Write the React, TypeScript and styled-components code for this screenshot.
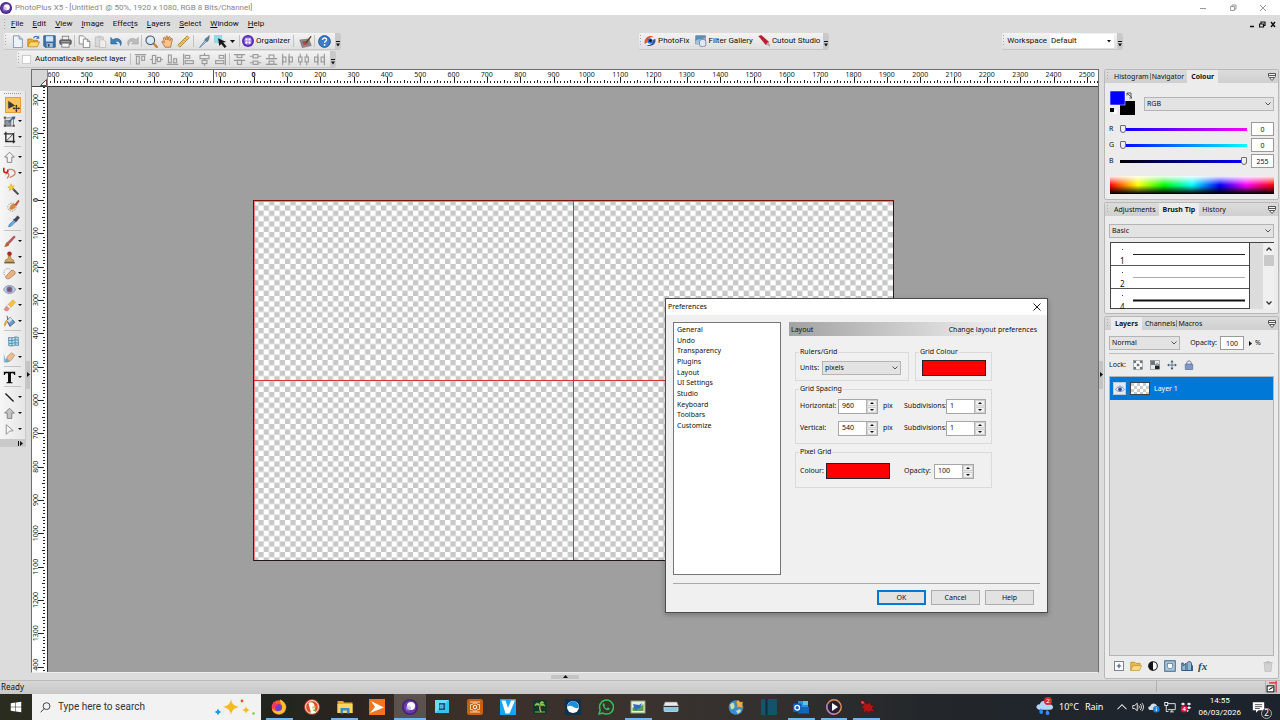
import React from 'react';
import styled, { createGlobalStyle, css } from 'styled-components';

const Global = createGlobalStyle`
  *, *::before, *::after { box-sizing: border-box; }
  html, body { margin: 0; padding: 0; }
  body { font-family: "Noto Sans", "Open Sans", sans-serif; font-size: 8px; color: #111; background: #dcdcdc; }
  button, input, select { font: inherit; color: inherit; margin: 0; padding: 0; border: 0; border-radius: 0; background: none; outline: 0; }
  svg { display: block; flex: none; }
  h1, h2, p, ul, fieldset { margin: 0; padding: 0; font-size: inherit; font-weight: inherit; }
`;

const narrow = css`font-family: Roboto, "Liberation Sans", sans-serif;`;

/* ---------- icons ---------- */

const align = (shapes: React.ReactNode) => <g fill="none" stroke="#9a9a9a" strokeWidth="1.400">{shapes}</g>;

const art: Record<string, React.ReactNode> = {
  photoplus: (<><circle cx="8" cy="8" r="8" fill="#43207c" /><circle cx="8" cy="8" r="6.4" fill="#6a3bb0" /><circle cx="9" cy="7" r="4" fill="#fff" /><circle cx="6.5" cy="9" r="2.6" fill="#b9a3e0" opacity=".6" /></>),
  organizer: (<><circle cx="8" cy="8" r="8" fill="#5a2bb5" /><circle cx="8" cy="8" r="5.6" fill="#8a62dc" /><g fill="#fff"><rect x="4.5" y="4.5" width="3" height="3" /><rect x="8.5" y="4.5" width="3" height="3" /><rect x="4.5" y="8.5" width="3" height="3" /><rect x="8.5" y="8.5" width="3" height="3" /></g></>),
  fresh: (<><path d="M3 1h7l4 4v10.500H3z" fill="#eef3fa" stroke="#75879e" /><path d="M10 1v4h4" fill="#c9d8ea" stroke="#75879e" /></>),
  open: (<><path d="M1 14V5h5l1.500 1.500H13V9" fill="#e9ad36" stroke="#b87c16" /><path d="M1 14.500L4 8.500h11.500L12.500 14.500z" fill="#fbd76f" stroke="#c28a1c" /><path d="M8 4c1-3 4-3 5.500-1" fill="none" stroke="#3a78c0" strokeWidth="1.500" /><path d="M15 .5v4h-4z" fill="#3a78c0" /></>),
  save: (<><path d="M1 1h14v14H2.500L1 13.500z" fill="#3a72ad" stroke="#244e7d" /><rect x="3.500" y="1.500" width="9" height="6.500" fill="#d3e6f5" /><rect x="4.500" y="10" width="7.500" height="5" fill="#aac0d6" /><rect x="6" y="11" width="2" height="3.500" fill="#284f7c" /></>),
  print: (<><rect x="4" y="1.500" width="8" height="5" fill="#eee" stroke="#777" /><rect x="1" y="6" width="14" height="5.500" rx="1" fill="#6b6f75" stroke="#44474b" /><rect x="3.500" y="10" width="9" height="5" fill="#f4f4f4" stroke="#777" /><path d="M3 8h10" stroke="#aaa" /></>),
  copy: (<><path d="M1.500 1h5l2.500 2.500V11h-7.500z" fill="#fdfdfd" stroke="#777" /><path d="M6.500 5h5l3 3v7.500h-8z" fill="#fdfdfd" stroke="#777" /><path d="M11.500 5v3h3" fill="none" stroke="#777" /></>),
  paste: (<g opacity=".55"><rect x="1.500" y="2.500" width="10" height="12" fill="#ccc" stroke="#999" /><rect x="4" y="1" width="5" height="3" fill="#aaa" /><path d="M7 6h5l2.500 2.500v7H7z" fill="#f6f6f6" stroke="#999" /></g>),
  undo: (<path d="M1 3v8h8L6.500 8.500C9 6.500 12.500 8 13 13c3.500-6-3-11.500-9.500-7z" fill="#3b82bd" stroke="#1f5b8f" strokeWidth=".7" />),
  redo: (<path d="M15 3v8H7l2.500-2.500C7 6.500 3.500 8 3 13c-3.500-6 3-11.500 9.500-7z" fill="#bdbdbd" stroke="#9a9a9a" strokeWidth=".7" />),
  zoom: (<><path d="M10 10l4.500 4.500" stroke="#c98a2a" strokeWidth="3" strokeLinecap="round" /><circle cx="6.500" cy="6.500" r="5.300" fill="#dceaf7" stroke="#4b5e78" strokeWidth="1.400" /></>),
  hand: (<path d="M5 15c-1-2.500-3.500-4.500-4-7 1-1 2 0 3 1.500L3 3.500c1-1.200 2-.6 2.500.8L6 6 6.200 1.800c1-1.200 2-.6 2 .4L8.500 6l1-3.500c1-1 2-.4 1.800.8L11 7l1.500-2.500c1-.6 1.900 0 1.500 1.300L12.500 11 12 15z" fill="#f8c48a" stroke="#a85a20" strokeWidth=".9" />),
  measure: (<><path d="M1 12.500L12.500 1 15 3.500 3.500 15z" fill="#f5c860" stroke="#a4741e" strokeWidth=".9" /><path d="M4 10l1.500 1.500M6 8l1.500 1.500M8 6l1.500 1.500M10 4l1.500 1.500" stroke="#7c5510" strokeWidth=".7" /></>),
  pen: (<><path d="M2 15.500L9.500 5.500l2 1.700z" fill="#bfd9ee" stroke="#4a7ba6" /><path d="M8.500 6.500c0-3 3-3 5.500-6-.5 4-.5 7-3.500 7.500z" fill="#5a7f9f" stroke="#3f627f" strokeWidth=".6" /></>),
  pick: (<><rect x="0" y="0" width="10" height="10" fill="#8fdbe6" /><path d="M5 4l1.500 9.500 2.400-2.500L13 16l2.500-2-4.200-4.800L15 8.500z" fill="#1a1a1a" /></>),
  canvasbrush: (<><path d="M1 6l11-1 3 8-11 2.500z" fill="#8a8f95" stroke="#555" strokeWidth=".6" /><path d="M3.500 8l6-.8L12 11l-6 1.500z" fill="#b44a3a" /><path d="M8 10l1-2.500L14.500 1l1 1.200L10.500 9z" fill="#6a3f26" /></>),
  help: (<><circle cx="8" cy="8" r="7.300" fill="#3b7cc4" stroke="#1f4f8e" /><path d="M5.500 6.200C5.500 2.800 10.700 3 10.500 6c-.2 1.800-2.400 1.800-2.400 3.800" fill="none" stroke="#fff" strokeWidth="1.700" /><circle cx="8.100" cy="12.200" r="1.100" fill="#fff" /></>),
  photofix: (<><circle cx="8" cy="8" r="6.500" fill="#fff" /><path d="M1 12C-1 4 8-2 14 3.500 9 2 4 5 4.500 10z" fill="#e3562b" /><path d="M15 5c2 7-5 12-12 8.500 5 .5 9-2 8.500-7z" fill="#2b57a6" /><circle cx="8" cy="8" r="3.600" fill="#2f6fc0" /><circle cx="8.500" cy="7.500" r="1.800" fill="#111" /></>),
  gallery: (<><rect x="1" y="1" width="13" height="11" fill="#5f8cb8" stroke="#8a6a4a" strokeWidth=".8" /><path d="M1 8c4-4 8-1 13-5v9H1z" fill="#9cc4e0" /><rect x="6" y="6" width="8.500" height="9.500" rx="3" fill="#dfe9f1" stroke="#5e7c98" /></>),
  knife: (<><path d="M1 1.500L4.500.5 14 9l-3.500 4z" fill="#c81830" stroke="#7d0a1c" strokeWidth=".6" /><path d="M11 12l3-3 1.500 6z" fill="#b9b9b9" stroke="#777" strokeWidth=".5" /></>),
  alTop: align(<><path d="M1 2h14" /><rect x="3" y="4" width="3.500" height="9.500" /><rect x="9.500" y="4" width="3.500" height="5" /></>),
  alMid: align(<><path d="M0 8h3M7 8h2M13 8h3" /><rect x="3" y="3" width="4" height="10" /><rect x="9" y="5.500" width="4" height="5" /></>),
  alBot: align(<><path d="M1 14h14" /><rect x="3" y="2.500" width="3.500" height="9.500" /><rect x="9.500" y="7" width="3.500" height="5" /></>),
  alLeft: align(<><path d="M2 1v14" /><rect x="4" y="3" width="5.500" height="3.500" /><rect x="4" y="9.500" width="10" height="3.500" /></>),
  alCen: align(<><path d="M8 0v3M8 7v2M8 13v3" /><rect x="2.500" y="3" width="11" height="4" /><rect x="5" y="9" width="6" height="4" /></>),
  alRight: align(<><path d="M14 1v14" /><rect x="6.500" y="3" width="5.500" height="3.500" /><rect x="2" y="9.500" width="10" height="3.500" /></>),
  diTop: align(<><path d="M1 2h14M1 9h14" /><rect x="5" y="2" width="6" height="3.500" /><rect x="5.500" y="9" width="5" height="5" /></>),
  diMid: align(<><path d="M1 4h4M11 4h4M1 12h4M11 12h4" /><rect x="5" y="2" width="6" height="4" /><rect x="5" y="10" width="6" height="4" /></>),
  diBot: align(<><path d="M1 7h14M1 14h14" /><rect x="5" y="2.500" width="6" height="4.500" /><rect x="5" y="10" width="6" height="4" /></>),
  diL: align(<><path d="M2 1v14M10 1v14" /><rect x="2" y="5" width="4" height="6" /><rect x="10" y="5" width="4" height="6" /></>),
  diC: align(<><path d="M4 1v4M4 11v4M12 1v4M12 11v4" /><rect x="2" y="5" width="4" height="6" /><rect x="10" y="5" width="4" height="6" /></>),
  diR: align(<><path d="M6 1v14M14 1v14" /><rect x="2" y="5" width="4" height="6" /><rect x="10" y="5" width="4" height="6" /></>),
  move: (<><path d="M1.500 2l8.500 6-8.500 4z" fill="#3a3a3a" /><path d="M11.500 8v7M8 11.500h7" stroke="#222" strokeWidth="1.100" /><path d="M11.500 7l1.700 2h-3.400zM11.500 16l1.700-2h-3.400zM7 11.500l2-1.700v3.400zM16 11.500l-2-1.700v3.400z" fill="#222" /></>),
  deform: (<><rect x="2.500" y="3.500" width="10.500" height="10" fill="#ddd" stroke="#777" /><rect x="2.500" y="7" width="7" height="6.500" fill="#8f969d" stroke="#666" /><path d="M7 9l5-5" stroke="#3d6590" strokeWidth="1.800" /><path d="M14 2v4l-4-4z" fill="#3d6590" /><g fill="#555"><rect x="1" y="2" width="2.500" height="2.500" /><rect x="12.500" y="2" width="2.500" height="2.500" /><rect x="12" y="12" width="2.500" height="2.500" /><rect x="1" y="12" width="2.500" height="2.500" /></g></>),
  crop: (<><path d="M3.500 1v12H15M1 3.500h12V15" fill="none" stroke="#2e2e2e" strokeWidth="1.700" /><path d="M3.500 13L14 2" stroke="#2e2e2e" strokeWidth="1" /></>),
  selArrow: (<path d="M8 1.500l6 6h-3.200V14H5.200V7.500H2z" fill="#f3f3f3" stroke="#7b7b7b" strokeWidth="1.100" />),
  lasso: (<><path d="M7 3c5-1 9 2 7.500 6-1.500 3.500-5.500 2-6 4.500M3 9c4-3 6 1 2 5" fill="none" stroke="#c4785a" strokeWidth="1.500" /><path d="M1 1v3.500c0 3 5 3 5 0V3" fill="none" stroke="#cc1f1f" strokeWidth="2" /></>),
  wand: (<><path d="M7 7l7 7" stroke="#4a4a52" strokeWidth="2.600" /><path d="M5 1l1 3 3-.5L7 6l1.500 3L5.500 7.500 3 9.500l.5-3L1 5l3-.8z" fill="#ffd02b" stroke="#c98f0c" strokeWidth=".5" /></>),
  selBrush: (<><circle cx="6" cy="10" r="5" fill="none" stroke="#777" strokeDasharray="1.500 1.500" /><path d="M3 13c0-5 3-8 7-7 2 4-2 8-7 7z" fill="#d9853a" /><path d="M9 7l5-6 1.500 1.500-4 6z" fill="#b4553a" /></>),
  dropper: (<><path d="M2 14.500l1-3L9 6l2 2-5.500 5.500z" fill="#6fb0e2" stroke="#2d6ca3" strokeWidth=".8" /><path d="M8 5l3.500 3.500M9.500 5.500L13 1.500l2 2-3.500 4z" fill="#445" stroke="#445" strokeWidth="1.300" /></>),
  brush: (<><path d="M1 14.500c3 0 7 0 6.500-4L5.500 8.500c-3 .5-1.500 4-4.500 6z" fill="#b2622c" /><path d="M6 8.500L13.500 1l1.700 1.500L8 10.500z" fill="#c05561" stroke="#6a3a3a" strokeWidth=".5" /></>),
  stamp: (<><circle cx="8" cy="3.500" r="2.800" fill="#a82b25" /><path d="M6.800 6h2.400l.8 3.500 3.500 2V13h-11v-1.500l3.500-2z" fill="#d7a85b" stroke="#7c5320" strokeWidth=".6" /><path d="M1.500 14.500h13" stroke="#5d3d16" strokeWidth="1.400" /></>),
  patch: (<><circle cx="6" cy="7" r="5" fill="none" stroke="#888" strokeDasharray="1.500 1.500" /><path d="M3.500 11.500l6.500-7c3-1.500 6 1.500 4.500 4.500l-7 5.500c-3 .5-5-1-4-3z" fill="#e6b184" stroke="#a86a3c" strokeWidth=".8" /></>),
  redeye: (<><path d="M.5 8c3-6.500 12-6.500 15 0-3 6.500-12 6.500-15 0z" fill="#c3cad9" stroke="#8289a0" /><circle cx="8" cy="8" r="3.600" fill="#5e72aa" /><circle cx="8" cy="8" r="1.600" fill="#c2312d" /></>),
  eraser: (<><path d="M1.500 12.500l3-4 3.500 3.500-2.500 2.500c-1.500.5-4-.5-4-2z" fill="#ee8888" stroke="#b05555" strokeWidth=".5" /><path d="M4.500 8.500l2-2L10 10l-2 2z" fill="#eee" stroke="#aaa" strokeWidth=".5" /><path d="M6.500 6.500L12 1l3.500 3L10 10z" fill="#f6c343" stroke="#c9902a" strokeWidth=".5" /></>),
  bucket: (<><path d="M4.500 6.500L9 3l5.500 6-6 5z" fill="#6f9cc8" stroke="#34557a" /><path d="M4.500 6.500L9 3l3 2.500-4.500 4z" fill="#cfe0ef" /><path d="M5 6C2 7 1 10 1.500 14c2 0 3-3 3-6z" fill="#e89a28" /><path d="M6 6L5 1" stroke="#444" /></>),
  mesh: (<><path d="M2 3c4 2 8-2 12 0-1 3 1 7 0 10-4-2-8 2-12 0 1-3-1-7 0-10z" fill="#bfe0f0" stroke="#3f84a8" /><path d="M2 6.500c4 2 8-2 12 0M2 10c4 2 8-2 12 0M6 3.500v10M10 2.500v10" fill="none" stroke="#3f84a8" /></>),
  smudge: (<><path d="M4 13c0-3 1-4 1-6l5.500-5 4 3-4 6-3 2z" fill="#eabf94" stroke="#b07b4c" strokeWidth=".7" /><path d="M1 3v11h5l2-2-3-3-2 1z" fill="#58a0cf" opacity=".7" /></>),
  text: (<path d="M1 1h14v4h-1.200C13.500 3.500 13 2.800 11.500 2.700H9.800V13c0 .9.600 1 2 1v1H4.200v-1c1.400 0 2-.1 2-1V2.700H4.500C3 2.800 2.500 3.500 2.200 5H1z" fill="#0c0c0c" />),
  line: (<path d="M3 3l10 10" stroke="#1c1c1c" strokeWidth="1.700" />),
  shape: (<path d="M8 1.500l6 6h-3.200V14H5.200V7.500H2z" fill="#c4c4c4" stroke="#7b7b7b" strokeWidth="1.100" />),
  node: (<path d="M4 2l8.500 7.500L8 10l-4 4z" fill="#fafafa" stroke="#8a8a8a" strokeWidth="1.100" />),
  eye: (<><path d="M1 9c3-6 11-6 14 0-3 4-11 4-14 0z" fill="#e6eefa" stroke="#5a76b8" strokeWidth="1.200" /><circle cx="8" cy="8.500" r="3" fill="#2a51a8" /><path d="M3 4l1.500 1.500M8 2v2M13 4l-1.500 1.500" stroke="#5a76b8" /></>),
  lockT: (<><rect x="1" y="1" width="14" height="14" fill="#fff" stroke="#8a939b" /><g fill="#6b7680"><rect x="1" y="1" width="4" height="4" /><rect x="11" y="1" width="4" height="4" /><rect x="6" y="6" width="4" height="4" /><rect x="1" y="11" width="4" height="4" /><rect x="11" y="11" width="4" height="4" /></g></>),
  lockC: (<><rect x="1" y="1" width="14" height="14" fill="#e8e8e8" stroke="#7c858c" /><rect x="1" y="1" width="7" height="7" fill="#6b7680" /><rect x="8" y="9" width="7" height="5.500" fill="#222" /><path d="M9.500 9V7.500c0-2 4-2 4 0V9" fill="none" stroke="#222" /></>),
  lockM: (<><path d="M8 2v12M2 8h12" stroke="#3c5a7d" strokeWidth="1.200" /><path d="M8 0l2.500 3.500h-5zM8 16l2.500-3.500h-5zM0 8l3.500-2.500v5zM16 8l-3.500-2.500v5z" fill="#3c5a7d" /></>),
  lock: (<><path d="M4.500 8V4.500c0-4 7-4 7 0V8" fill="none" stroke="#6b7c9c" strokeWidth="1.600" /><rect x="2" y="6.500" width="12" height="9" rx="1" fill="#7f97c6" stroke="#51658f" /></>),
  addLayer: (<><rect x="2" y="2" width="12" height="12" fill="#fff" stroke="#75828d" strokeWidth="1.300" /><path d="M8 5v6M5 8h6" stroke="#3c5a7d" strokeWidth="1.500" /></>),
  folder: (<><path d="M1 14V3h5.500L8 4.500h5.500V8" fill="#ecb947" stroke="#ba8627" /><path d="M1 14l3-6.500h11.500L12.500 14z" fill="#fbdb84" stroke="#c5933a" /></>),
  adjust: (<><circle cx="8" cy="8" r="5.800" fill="#fff" stroke="#222" strokeWidth="1.400" /><path d="M8 2.200v11.600A5.800 5.800 0 018 2.200z" fill="#111" /></>),
  mask: (<><rect x="1" y="1" width="14" height="14" fill="#a9c9e0" stroke="#46698a" strokeWidth="1.400" /><path d="M4.500 4.500h7V9L10 11.500H6L4.500 9z" fill="#fff" stroke="#46698a" /></>),
  groupMask: (<><path d="M1 14V4h2v4l3.500-4V14zM8 14V5c0-4 6-4 6 0v9z" fill="#8fb8d6" stroke="#34597c" strokeWidth="1.300" /><path d="M1 14h14.500V7" fill="none" stroke="#34597c" strokeWidth="1.500" /></>),
  trash: (<g fill="#d2d2d2" stroke="#bdbdbd"><path d="M3 5h10l-1 10.500H4z" /><path d="M2 3.500h12M6 2h4" strokeWidth="1.500" /></g>),
  resize: (<><rect x="1.500" y="6.500" width="9" height="8" fill="#fff" stroke="#111" strokeWidth="1.400" /><path d="M4 11.500l5-3" stroke="#111" strokeWidth="1.500" /><path d="M4 2.500h9.500V15M13.500 0v5" fill="none" stroke="#e02020" strokeWidth="1.400" /></>),
  windows: (<path d="M1 3l6.300-.9v5.500H1zM8 2l7-1v6.600H8zM1 8.400h6.300v5.500L1 13zM8 8.400h7V15l-7-1z" fill="#fff" />),
  search: (<g fill="none" stroke="#222" strokeWidth="1.200"><circle cx="9.500" cy="6" r="5" /><path d="M6 9.500l-5 5.500" /></g>),
  firefox: (<><circle cx="8" cy="8.500" r="7.300" fill="#ff5a2c" /><path d="M9 .5c5 2 8 8 4 12.500C9 17 2 15 1 10c3 3 9 3 10-1 .6-3-2-4-2-8.500z" fill="#ffc02c" /><circle cx="7.500" cy="8.500" r="3.500" fill="#6a3fd8" /><path d="M1 9C1 6 2 4 3 2.500 4 5 6 5 8 5c-2 1-2 3-4 3z" fill="#f8316a" /></>),
  duck: (<><circle cx="8" cy="8" r="7.800" fill="#d9512c" /><circle cx="8" cy="8" r="6.400" fill="#d9512c" stroke="#fff" strokeWidth=".9" /><path d="M4.500 4c3-2 6.500 0 6 3.500l1.500 6.500H7z" fill="#fff" /><path d="M8.500 7.500h4l-2 1.700H8z" fill="#f6c22c" /><path d="M8.500 11l3.500-1v3z" fill="#4fae45" /></>),
  explorer: (<><path d="M.5 2h5.500l1.500 1.500h8V14H.5z" fill="#e5a827" /><rect x=".5" y="5" width="15" height="9" fill="#fbd665" /><path d="M3.500 14.500V9h9v5.500h-2.500V11.500H6v3z" fill="#3c8bd0" /></>),
  orange: (<><rect width="16" height="16" fill="#f47321" /><path d="M2 2l13 6.500L1 14l5-6z" fill="#fff" /></>),
  bluedoc: (<><rect x="1" y="1" width="14" height="13" fill="#35c3e8" /><path d="M1 1h14L1 14z" fill="#6adcf4" /><rect x="5" y="4" width="6" height="7" fill="#14558c" /><path d="M6 6h3v3H6z" fill="#2f9fd0" stroke="#9de" strokeWidth=".6" /></>),
  orangecam: (<><rect width="16" height="16" rx="2.500" fill="#c9600f" /><path d="M3 3h10M3 13h10M3.500 5.500h2l1-1.500h3l1 1.500h2v5h-2l-1 1.500h-3l-1-1.500h-2z" stroke="#f6d5b4" fill="none" strokeWidth="1" /><circle cx="8" cy="8" r="1.800" fill="none" stroke="#fff" strokeWidth="1" /></>),
  vee: (<><rect width="16" height="16" fill="#1aa3f0" /><path d="M1.500 1.500h4L8 9l3-7.500h4L9.500 14.500h-4z" fill="#fff" /></>),
  tree: (<><rect x="1" y="1" width="14" height="14" rx="2" fill="#12372b" /><path d="M9 13c-1.500-2-1.500-4-1-6" stroke="#d8b25a" strokeWidth="1.300" fill="none" /><path d="M3 13h10" stroke="#7fb84c" /><path d="M8 6C6 3 3 4 3 6.500c2-1 3.500 0 5-.5 2-2 4-1.500 5 1-2-1-3 0-5-1zM8 5c0-3 3-3 4-1" fill="#9ccf5a" stroke="#7fb84c" /></>),
  wave: (<><rect width="16" height="16" fill="#0a3350" /><circle cx="8" cy="8" r="6" fill="#fff" /><path d="M2 8c2-8 10-8 12 0-4 4-7-4-12 0z" fill="#1d8fd6" /></>),
  whatsapp: (<><path d="M1 15l1.200-4A7 7 0 118 15c-1.300 0-2.300-.3-3.200-.9z" fill="none" stroke="#2bc35a" strokeWidth="1.500" /><path d="M5 4.500c1-1 1.700.8 2 1.700L6.300 7.300c.8 1.300 1.500 1.800 2.600 2.300l1-1c1 .3 2.500 1 1.500 2C8.500 13 3.500 7.500 5 4.500z" fill="#2bc35a" /></>),
  photo: (<><rect x="1" y="2" width="14" height="12" fill="#e8eee0" stroke="#8ba46a" /><path d="M2.500 9c3-3 6 1 11-4v7h-11z" fill="#5d9c48" /><path d="M3 5l6 1 3-2-2 5-5 2z" fill="#2a6fc0" /></>),
  scanner: (<><path d="M2 3h12l1.500 4H.5z" fill="#e7e9ec" stroke="#777" strokeWidth=".6" /><rect x="1" y="7" width="14" height="5.500" rx="1" fill="#8ec4dc" stroke="#ddd" strokeWidth=".8" /><path d="M.5 7.500h15" stroke="#333" /></>),
  globe: (<><circle cx="8" cy="8.500" r="7.300" fill="#3a8fd0" /><path d="M2 6c2-3 5-2 4 0 2 2-1 5-3 4zM8 12l4-2 1 2-3 3z" fill="#cfe0a0" /><path d="M8 3l2-2 2 2h3l-1 3 1 3-4-1-2 1V5z" fill="#f0b23a" stroke="#9b6a14" strokeWidth=".5" /></>),
  teal: (<><rect width="16" height="16" fill="#14536a" /><path d="M5.500 0v16" stroke="#082c3a" strokeWidth="1.800" /></>),
  outlook: (<><path d="M5 2h10v7H5z" fill="#2a8fdd" /><path d="M10 2h5v4h-5z" fill="#5cc0f5" /><path d="M5 8h11v6.500H5z" fill="#1466b8" /><rect x="0" y="4.500" width="8.500" height="8.500" rx="1" fill="#0f5fb8" /><circle cx="4.200" cy="8.700" r="2.300" fill="none" stroke="#fff" strokeWidth="1.300" /></>),
  player: (<><circle cx="8" cy="8" r="7.200" fill="#262030" stroke="#e0915f" strokeWidth="1.400" /><path d="M1.500 5A7.200 7.200 0 008 15.200" stroke="#a577d8" strokeWidth="1.400" fill="none" /><path d="M6 4l6 4-6 4z" fill="#fff" /></>),
  splat: (<><path d="M1 3c2-3 5-1 5 1l3 1 2-2 1 3 4 1-3 2 3 4-5-1-1 3-2-3-4 2 1-4-3-2 3-2z" fill="#b01414" stroke="#5e0606" strokeWidth=".5" /><circle cx="3.500" cy="3.500" r="1.200" fill="#e55" /></>),
  weather: (<><path d="M3 10C-1 9 0 5 3.500 5 5 0 12 1 12.500 5 17 5 17 10 13.500 10z" fill="#b5d4fa" /><path d="M4.500 9c-2.500 3-1 5 .5 5s3-2 -.5-5zM10.500 10c-2.500 3-1 5 .5 5s3-2-.5-5z" fill="#2a8cff" /></>),
  chevUp: (<path d="M2 11l6-6 6 6" fill="none" stroke="#f2f2f2" strokeWidth="1.400" />),
  volume: (<g fill="none" stroke="#f2f2f2" strokeWidth="1.200"><path d="M1 6v4h2.500L7 13V3L3.500 6zM9 6c1 1 1 3 0 4M11 4c2 2 2 6 0 8M13 2.500c3 3 3 8 0 11" /></g>),
  cloud: (<><path d="M3 12C-1 11 0 7 3 7c1-5 8-5 9 0 3 0 4 4 1 5z" fill="#d8dde3" /><circle cx="11" cy="11" r="4.300" fill="#1683dc" /><path d="M11 10v3.500M11 8.200v1" stroke="#fff" strokeWidth="1.200" /></>),
  monitor: (<g fill="none" stroke="#f2f2f2" strokeWidth="1.200"><path d="M5 3.500h10v8H5M8 14.500h5M10.500 11.500v3" /><rect x="1" y="2" width="4" height="4" /><path d="M3 6v8h3" /></g>),
  dropbox: (<><path d="M4 2l3 2-3 2-3-2zM12 2l3 2-3 2-3-2zM12 7l3 2-3 2-3-2zM9 11l3 2-2 1.500-2-2z" fill="#e8f0f8" /><circle cx="5.500" cy="10.500" r="4.500" fill="#d8163c" /><path d="M6.500 13.200V8L3.800 11.500h4" fill="none" stroke="#fff" strokeWidth="1.100" /></>),
  notif: (<><path d="M1 1.500h14v10H8L5 14.500v-3H1z" fill="#fff" /><path d="M3.500 4.500h9M3.500 7h9M3.500 9.200h6" stroke="#333" strokeWidth="1" /></>),
};

const Icon = ({ name, size = 12 }: { name: string; size?: number }) => (
  <svg width={size} height={size} viewBox="0 0 16 16" aria-hidden="true">{art[name]}</svg>
);

/* ---------- application frame ---------- */

const Screen = styled.div`
  position: relative; display: flex; flex-direction: column; height: 100vh; overflow: hidden; line-height: 10px; cursor: default;
`;
const TitleBar = styled.header`
  ${narrow} display: flex; align-items: center; height: 15px; padding: 0 13px 0 0; gap: 3px; background: #fff; color: #858585;
  h1 { flex: 1; }
`;
const WinButtons = styled.div` display: flex; gap: 22px; `;
const Plain = styled.button` display: flex; align-items: center; justify-content: center; `;
const MenuBar = styled.nav`
  ${narrow} display: flex; align-items: center; height: 18px; padding: 0 4px;
  ul { display: flex; flex: 1; list-style: none; gap: 9px; margin-left: 3px; }
  u { text-underline-offset: 1px; }
`;
const MdiButtons = styled.div` display: flex; gap: 4px; `;
const Grip = styled.span<{ $h?: number }>`
  flex: none; width: 2px; height: ${p => p.$h ?? 12}px; margin-right: 2px;
  background: repeating-linear-gradient(#a8a8a8 0 1px, transparent 1px 3px); background-size: 1px 100%; background-repeat: no-repeat;
`;
const BarRow = styled.div<{ $left: number }>` ${narrow} display: flex; height: 18px; padding-left: ${p => p.$left}px; `;
const Gap = styled.div<{ $g: number }>` flex: ${p => p.$g} 0 0; `;
const Toolbar = styled.div`
  position: relative; display: flex; align-items: center; flex: none; height: 17px; padding: 0 9px 0 1px; white-space: nowrap;
  background: linear-gradient(#f3f3f3, #dfdfdf); border-bottom: 1px solid #c6c6c6; border-radius: 2px;
`;
const MoreButton = styled.button`
  position: absolute; right: 0; top: 0; display: flex; align-items: flex-end; justify-content: center; width: 6px; height: 100%; && { padding-bottom: 2px; background: #c9c9c9; border-radius: 0 2px 2px 0; }
`;
const Tool = styled.button<{ $wide?: boolean }>`
  display: flex; align-items: center; justify-content: center; gap: 2px; height: 16px; ${p => !p.$wide && 'width: 16px;'}
`;
const CaretButton = styled(Plain)` width: 9px; height: 16px; `;
const Rule = styled.span<{ $m?: number }>` width: 1px; height: 12px; margin: 0 ${p => p.$m ?? 1}px; background: #c2c2c2; `;
const Check = styled.label`
  display: flex; align-items: center; gap: 4px; margin: 0 3px 0 0;
  && input { appearance: none; width: 9px; height: 9px; background: #fff; border: 1px solid #ccc; }
`;
const WorkspaceField = styled.div` display: flex; align-items: center; gap: 3px; `;

const DropIcon = () => (<svg width="4" height="6" viewBox="0 0 4 6"><path d="M0 0h4v1H0zM0 2.500h4L2 5.500z" fill="#111" /></svg>);
const Caret = () => (<svg width="5" height="3" viewBox="0 0 5 3"><path d="M0 0h5L2.500 3z" fill="#111" /></svg>);

/* ---------- work area ---------- */

const Main = styled.div` display: flex; flex: 1; min-height: 0; `;
const ToolColumn = styled.aside` flex: none; width: 26px; padding-top: 22px; `;
const ToolBox = styled.div`
  display: flex; flex-direction: column; background: linear-gradient(90deg, #f6f6f6, #e6e6e6); border-right: 1px solid #c9c9c9; padding-top: 2px;
`;
const DotRow = styled.span` height: 1px; margin: 0 4px 3px; background: repeating-linear-gradient(90deg, #999 0 1px, transparent 1px 2px); `;
const ToolSlot = styled.div<{ $more: boolean }>`
  display: flex; align-items: center; height: 16px; padding-left: ${p => (p.$more ? 1 : 5)}px; gap: 1px;
`;
const ToolButton = styled.button<{ $on?: boolean }>`
  display: flex; align-items: center; justify-content: center; width: 16px; height: 16px;
  ${p => p.$on && css`&& { background: #fcc35f; border: 1px solid #e0a040; }`}
`;
const ToolRule = styled.span` height: 1px; margin: 1px 4px 2px; background: #c4c4c4; `;
const ToolFoot = styled.button` display: flex; justify-content: flex-end; align-items: center; height: 8px; && { margin-top: 2px; padding-right: 2px; background: #c9c9c9; } `;
const SideHandle = styled.div` display: flex; flex: none; align-items: center; width: 5px; `;
const HandleButton = styled.button<{ $flat?: boolean }>`
  display: flex; align-items: center; justify-content: center; && { background: #c4c4c4; }
  ${p => p.$flat ? 'width: 28px; height: 4px;' : 'width: 4px; height: 28px;'}
`;
const Work = styled.main` display: flex; flex: 1; flex-direction: column; min-width: 0; `;
const Frame = styled.div`
  display: grid; flex: 1; min-height: 0; grid-template: 17px 1fr / 16px 1fr; border: 1px solid #6e6e6e; border-bottom-color: #eee; overflow: hidden;
`;
const Corner = styled.div` display: flex; align-items: flex-end; justify-content: flex-end; background: #d6d6d6; border-right: 1px solid #888; border-bottom: 1px solid #444; `;
const RulerTop = styled.div` background: #fff; border-bottom: 1px solid #333; overflow: hidden; svg { width: 100%; height: 100%; } `;
const RulerSide = styled.div` background: #fff; border-right: 1px solid #333; overflow: hidden; min-height: 0; svg { width: 100%; height: 100%; } `;
const Canvas = styled.div` position: relative; min-width: 0; min-height: 0; overflow: hidden; background: #9f9f9f; `;
const Sheet = styled.div` position: absolute; left: 205px; top: 113px; `;
const BottomHandle = styled.div` display: flex; flex: none; justify-content: center; align-items: center; height: 7px; `;

const STEP = 100 / 3;

const HRuler = () => {
  const origin = 205.5;
  const majors = Array.from({ length: 60 }, (_, i) => i - 7);
  return (
    <svg aria-label="Horizontal ruler">
      {majors.map(m => (
        <g key={m}>
          <path d={`M${Math.round(origin + m * STEP) + 0.5} 7v6`} stroke="#222" />
          {Array.from({ length: 9 }, (_, k) => (
            <path key={k} d={`M${Math.round(origin + m * STEP + (k + 1) * STEP / 10) + 0.5} ${k === 4 ? 10 : 11}V13`} stroke="#222" />
          ))}
          {m >= -6 && m <= 25 && <text x={origin + m * STEP} y="7" fontSize="7" textAnchor="middle" fill="#222" fontWeight={m ? 400 : 700}>{Math.abs(m) * 100}</text>}
        </g>
      ))}
      <path d="M165.500 0v11" stroke="#555" />
    </svg>
  );
};

const VRuler = () => {
  const origin = 113;
  const majors = Array.from({ length: 40 }, (_, i) => i - 4);
  return (
    <svg aria-label="Vertical ruler">
      {majors.map(m => (
        <g key={m}>
          <path d={`M6 ${Math.round(origin + m * STEP) + 0.5}h6`} stroke="#222" />
          {Array.from({ length: 9 }, (_, k) => (
            <path key={k} d={`M${k === 4 ? 10 : 11} ${Math.round(origin + m * STEP + (k + 1) * STEP / 10) + 0.5}H13`} stroke="#222" />
          ))}
          {m >= -3 && m <= 14 && <text transform={`translate(6 ${origin + m * STEP}) rotate(-90)`} fontSize="7" textAnchor="middle" fill="#222" fontWeight={m ? 400 : 700}>{Math.abs(m) * 100}</text>}
        </g>
      ))}
    </svg>
  );
};

const Artboard = () => (
  <svg width="641" height="361" viewBox="0 0 641 361" aria-label="Untitled1">
    <defs>
      <pattern id="checks" width="10.667" height="10.667" patternUnits="userSpaceOnUse">
        <rect width="10.667" height="10.667" fill="#fff" />
        <path d="M5.333 0h5.334v5.333H5.333zM0 5.333h5.333v5.334H0z" fill="#c8c8c8" />
      </pattern>
    </defs>
    <rect width="641" height="361" fill="url(#checks)" />
    <rect x="1" y="1" width="639" height="1" fill="#f08080" />
    <rect x="1" y="1" width="1" height="359" fill="#f08080" />
    <rect x="320" y="1" width="1" height="359" fill="#e03030" />
    <rect x="1" y="180" width="639" height="1" fill="#e03030" />
    <rect x=".5" y=".5" width="640" height="360" fill="none" stroke="#221818" />
    <rect x="0" y="0" width="641" height="1" fill="#7a1414" />
    <rect x="0" y="0" width="1" height="361" fill="#5a1414" />
  </svg>
);

/* ---------- form parts ---------- */

const SelectBox = styled.span<{ $w?: number; $white?: boolean }>`
  position: relative; display: flex; align-items: center; height: 14px; ${p => p.$w ? `flex: none; width: ${p.$w}px;` : 'flex: 1;'}
  background: ${p => (p.$white ? '#fff' : '#e3e3e3')}; border: 1px solid ${p => (p.$white ? '#fff' : '#b4b4b4')};
  && select { appearance: none; width: 100%; height: 100%; padding-left: ${p => (p.$white ? 0 : 2)}px; line-height: 10px; }
  svg { position: absolute; right: 2px; pointer-events: none; }
`;
const Select = ({ id, label, value, w, white, options = [] }: { id?: string; label?: string; value: string; w?: number; white?: boolean; options?: string[] }) => (
  <SelectBox $w={w} $white={white}>
    <select id={id} aria-label={label} defaultValue={value}>
      <option>{value}</option>
      {options.map(o => <option key={o}>{o}</option>)}
    </select>
    {white ? <svg width="4" height="3" viewBox="0 0 4 3"><path d="M0 0h4L2 2.500z" fill="#111" /></svg> : <svg width="6" height="4" viewBox="0 0 6 4"><path d="M.5 .5L3 3 5.500 .5" fill="none" stroke="#555" /></svg>}
  </SelectBox>
);

const NumberBox = styled.input<{ $w: number }>`
  && { flex: none; width: ${p => p.$w}px; height: 14px; background: #fff; border: 1px solid #9a9a9a; text-align: center; line-height: 10px; }
`;
const SpinBox = styled.span`
  display: flex; flex: none; width: 40px; height: 15px; background: #e6e6e6; border: 1px solid #a6a6a6;
  && input { flex: 1; min-width: 0; padding-left: 3px; background: #fff; border-right: 1px solid #b4b4b4; }
`;
const SpinButtons = styled.span`
  display: flex; flex-direction: column; width: 10px; gap: 1px;
  && button { display: flex; flex: 1; align-items: center; justify-content: center; background: #f0f0f0; border: 1px solid #d0d0d0; }
`;
const Spin = ({ id, value }: { id: string; value: string }) => (
  <SpinBox>
    <input id={id} defaultValue={value} />
    <SpinButtons>
      <button aria-label="Increase"><svg width="4" height="2" viewBox="0 0 4 2"><path d="M0 2h4L2 0z" fill="#111" /></svg></button>
      <button aria-label="Decrease"><svg width="4" height="2" viewBox="0 0 4 2"><path d="M0 0h4L2 2z" fill="#111" /></svg></button>
    </SpinButtons>
  </SpinBox>
);

/* ---------- studio panels ---------- */

const Studio = styled.aside` display: flex; flex: none; flex-direction: column; width: 176px; gap: 2px; padding: 0 1px 1px 0; font-size: 7px; `;
const Panel = styled.section<{ $h?: number }>`
  display: flex; flex-direction: column; min-height: 0; background: #ececec; border: 1px solid #b8b8b8; border-radius: 2px;
  ${p => (p.$h ? `flex: none; height: ${p.$h}px;` : 'flex: 1;')}
`;
const PanelHead = styled.div`
  display: flex; flex: none; align-items: stretch; height: 13px; padding: 0 2px; background: linear-gradient(#dcdcdc, #cfcfcf);
  svg, ${Grip} { align-self: center; }
`;
const Tab = styled.button<{ $on?: boolean }>`
  && { padding: 0 ${p => (p.$on ? 4 : 3)}px; white-space: nowrap; ${p => p.$on && css`font-weight: 700; background: #ececec;`} }
  i { display: inline-block; width: 1px; height: 7px; margin: 0 1px; background: #888; vertical-align: -1px; }
`;
const Fill = styled.span` flex: 1; `;
const PanelBody = styled.div<{ $top?: number }>` display: flex; flex: 1; flex-direction: column; min-height: 0; padding: ${p => p.$top ?? 8}px 4px 2px; `;
const Row = styled.div<{ $gap?: number; $h?: number; $in?: number }>`
  display: flex; flex: none; align-items: center; gap: ${p => p.$gap ?? 4}px; padding-left: ${p => p.$in ?? 0}px; ${p => p.$h && `height: ${p.$h}px;`}
`;
const SliderGroup = styled.div` display: flex; flex: none; flex-direction: column; padding-top: 5px; `;
const SliderRow = styled.div`
  display: flex; align-items: center; height: 16px; gap: 4px;
  label { width: 7px; }
`;
const Slider = styled.input<{ $from: string; $to: string }>`
  && { appearance: none; flex: 1; min-width: 0; height: 8px; background: linear-gradient(90deg, ${p => p.$from}, ${p => p.$to}) center / 100% 3px no-repeat; }
  &::-webkit-slider-thumb { appearance: none; width: 6px; height: 8px; background: #eee; border: 1px solid #6a6a6a; border-radius: 1px 1px 3px 3px; }
`;
const Spectrum = styled.div`
  flex: none; height: 18px; margin: 7px 0 0 1px;
  background: linear-gradient(rgba(255,255,255,.95), rgba(255,255,255,0) 50%, rgba(0,0,0,0) 52%, rgba(0,0,0,.9) 94%, #000 95%), linear-gradient(90deg, #f00, #ff0 17%, #0f0 33%, #0ff 50%, #00f 67%, #f0f 83%, #f00);
`;
const BrushList = styled.div` display: flex; flex: none; height: 67px; margin: 4px 0 0 1px; background: #dcdcdc; border-top: 1px solid #444; overflow: hidden; `;
const BrushItems = styled.ul` width: 140px; list-style: none; background: #fff; border: 1px solid #444; border-top: 0; `;
const BrushItem = styled.li`
  display: flex; align-items: flex-end; height: 23px; gap: 8px; padding-left: 9px; border-bottom: 1px solid #555; font-size: 8px; line-height: 8px;
  svg { flex: 1; align-self: center; }
`;
const BrushMark = styled.span`
  display: flex; flex-direction: column; align-items: center; gap: 7px;
  &::before { content: ''; width: 1px; height: 1px; background: #444; }
`;
const Scroll = styled.div` display: flex; flex-direction: column; align-items: center; width: 11px; margin-left: auto; padding: 4px 0; background: #f0f0f0; `;
const Thumb = styled.span` width: 10px; height: 11px; margin-top: 4px; background: #c9c9c9; `;
const Hr = styled.div` flex: none; height: 1px; margin-top: 3px; background: #bdbdbd; `;
const OpacityLabel = styled.label` width: 38px; padding-right: 2px; text-align: right; `;
const LayerList = styled.div` flex: 1; min-height: 0; background: #dedede; border: 1px solid #b5b5b5; `;
const LayerRow = styled.div` display: flex; align-items: center; height: 23px; padding-left: 3px; gap: 4px; background: #0078d7; color: #fff; `;
const EyeBox = styled.button` display: flex; align-items: center; justify-content: center; width: 13px; height: 13px; && { background: #e6e9ef; border: 1px solid #bcd; } `;
const ThumbBox = styled.span` width: 20px; height: 13px; border: 1px solid #444; background: conic-gradient(#fff 25%, #ccc 0 50%, #fff 0 75%, #ccc 0) 0 0 / 6px 6px; `;
const Fx = styled.button` && { font: italic 700 11px/10px "Liberation Serif", serif; color: #26486c; } `;
const StatusBar = styled.footer`
  display: flex; flex: none; align-items: center; height: 14px; padding: 0 2px 2px 1px; background: linear-gradient(#d6d6d6, #c8c8c8); border-top: 1px solid #bbb;
`;
const StatusCell = styled.span` width: 110px; height: 11px; border: 1px solid #b0b0b0; border-width: 0 1px; `;

const MenuMark = () => (<svg width="8" height="8" viewBox="0 0 8 8"><path d="M.5 .5h7v3L4 7.500 .5 3.500z" fill="#f4f4f4" stroke="#555" /><path d="M1 2.500h6M2 4.500h4" stroke="#555" /></svg>);

/* ---------- dialog ---------- */

const Dialog = styled.div`
  position: absolute; left: 665px; top: 298px; display: flex; flex-direction: column; width: 383px; height: 315px; background: #f0f0f0; border: 1px solid #4c4c4c; font-size: 7px; box-shadow: 0 2px 5px rgba(0,0,0,.25);
`;
const DialogTitle = styled.div` display: flex; align-items: center; justify-content: space-between; height: 16px; padding: 0 6px 0 2px; background: #fff; `;
const DialogBody = styled.div` display: flex; flex: 1; gap: 8px; margin: 7px 7px 0; min-height: 0; `;
const CategoryBox = styled.div` flex: none; width: 108px; height: 253px; background: #fff; border: 1px solid #777; `;
const Categories = styled.ul`
  display: flex; flex-direction: column; justify-content: space-between; align-items: flex-start; height: 106px; && { margin: 2px 0 0 2px; } list-style: none;
  && button { display: block; height: 10px; padding: 0 1px; line-height: 10px; }
`;
const Page = styled.div` flex: 1; min-width: 0; `;
const PageHead = styled.div` display: flex; justify-content: space-between; align-items: center; height: 14px; padding: 1px 3px 0 2px; background: linear-gradient(90deg, #a2a2a2, #f0f0f0 85%); `;
const Groups = styled.div` display: grid; grid-template-columns: 114px 77px; column-gap: 6px; row-gap: 3px; margin: 11px 0 0 6px; `;
const Group = styled.fieldset<{ $wide?: boolean; $h: number }>`
  && { min-width: 0; height: ${p => p.$h}px; border: 1px solid #dadada; padding: 0 3px; ${p => p.$wide && 'grid-column: 1 / 3;'} }
  legend { height: 10px; padding: 0 1px; line-height: 10px; }
`;
const Line = styled.div<{ $h?: number; $in?: number }>` display: flex; align-items: center; height: ${p => p.$h ?? 22}px; padding-left: ${p => p.$in ?? 1}px; white-space: nowrap; `;
const Cell = styled.label<{ $w: number }>` flex: none; width: ${p => p.$w}px; `;
const Unit = styled.span` flex: none; width: 26px; padding-left: 5px; `;
const Swatch = styled.button<{ $gap?: number }>` flex: none; width: 64px; height: 16px; && { margin-right: ${p => p.$gap ?? 0}px; background: #f00; border: 1px solid #222; } `;
const Actions = styled.div`
  display: flex; justify-content: flex-end; gap: 5px; margin: 0 7px; padding: 6px 6px 7px 0; border-top: 1px solid #a9a9a9;
`;
const Push = styled.button<{ $primary?: boolean }>`
  && { width: 49px; height: 15px; background: #e2e2e2; border: ${p => (p.$primary ? '2px solid #0078d7' : '1px solid #adadad')}; line-height: 10px; }
`;

/* ---------- task bar ---------- */

const TaskBar = styled.footer`
  display: flex; flex: none; height: 26px; color: #fff;
  background: linear-gradient(90deg, #2b2c20 0, #20261f 21%, #2c2420 28%, #3c2f29 36%, #3a322e 50%, #33302f 60%, #23272b 72%, #1c232d 100%);
`;
const StartButton = styled.button` display: flex; flex: none; align-items: center; justify-content: center; width: 32px; `;
const SearchBox = styled.label`
  ${narrow} display: flex; flex: none; align-items: center; width: 229px; padding: 0 6px 0 8px; gap: 7px; background: #f2f2f2;
  && input { flex: 1; min-width: 0; font-size: 10px; line-height: 14px; }
  input::placeholder { color: #333; opacity: 1; }
`;
const Apps = styled.div` display: grid; flex: none; grid-template-columns: repeat(19, 1fr); width: 620px; margin-left: 2px; `;
const AppButton = styled.button<{ $open?: boolean; $on?: boolean }>`
  position: relative; display: flex; align-items: center; justify-content: center;
  ${p => p.$on && css`&& { background: #5b514d; }`}
  ${p => p.$open && css`&::after { content: ''; position: absolute; left: ${p.$on ? 0 : 3}px; right: ${p.$on ? 0 : 3}px; bottom: 0; height: 2px; background: #76b5e8; }`}
`;
const Tray = styled.div` display: flex; flex: 1; align-items: center; justify-content: flex-end; padding-right: 15px; gap: 4px; `;
const Weather = styled.button` position: relative; display: flex; align-items: center; gap: 6px; && { margin-right: 9px; font-size: 9px; } `;
const Badge = styled.span<{ $dark?: boolean }>`
  position: absolute; display: flex; align-items: center; justify-content: center; border-radius: 50%; line-height: 8px;
  ${p => p.$dark ? 'right: -7px; bottom: -5px; width: 11px; height: 11px; font-size: 8px; background: #26292d; border: 1px solid #aaa;' : 'left: 8px; top: -2px; width: 8px; height: 8px; font-size: 6px; background: #d13030;'}
`;
const Clock = styled.time` ${narrow} margin: 0 7px 0 2px; line-height: 12px; text-align: center; `;
const Notice = styled.button` position: relative; `;

const menus = ['File', 'Edit', 'View', 'Image', 'Effects', 'Layers', 'Select', 'Window', 'Help'];
const underline: Record<string, number> = { Effects: 5 };
const Accel = ({ word }: { word: string }) => {
  const i = underline[word] ?? 0;
  return <span>{word.slice(0, i)}<u>{word[i]}</u>{word.slice(i + 1)}</span>;
};

const toolGroups: [string, boolean][][] = [
  [['move', false], ['deform', true], ['crop', true]],
  [['selArrow', true], ['lasso', true], ['wand', false], ['selBrush', false], ['dropper', false]],
  [['brush', true], ['stamp', true], ['patch', true], ['redeye', true], ['eraser', true], ['bucket', true]],
  [['mesh', false], ['smudge', true]],
  [['text', true]],
  [['line', true], ['shape', true], ['node', true]],
];

const apps: { icon?: string; open?: boolean; on?: boolean }[] = [
  { icon: 'firefox', open: true }, { icon: 'duck' }, { icon: 'explorer', open: true }, { icon: 'orange' },
  { icon: 'photoplus', open: true, on: true }, { icon: 'bluedoc' }, { icon: 'orangecam' }, { icon: 'vee' }, { icon: 'tree' },
  { icon: 'wave' }, { icon: 'whatsapp' }, { icon: 'photo', open: true }, { icon: 'scanner' }, {}, { icon: 'globe' },
  { icon: 'teal' }, { icon: 'outlook', open: true }, { icon: 'player', open: true }, { icon: 'splat', open: true },
];

const channels = [
  { id: 'r', name: 'R', value: '0', from: '#00f', to: '#f0f' },
  { id: 'g', name: 'G', value: '0', from: '#00f', to: '#0ff' },
  { id: 'b', name: 'B', value: '255', from: '#000', to: '#00f' },
];

const brushes = [
  { size: '1', color: '#222', width: 1 },
  { size: '2', color: '#aaa', width: 1 },
  { size: '4', color: '#111', width: 2 },
];

const Tools = ({ names }: { names: string[] }) => (<>{names.map(n => <Tool key={n} aria-label={n}><Icon name={n} size={13} /></Tool>)}</>);

export default function App() {
  return (
    <Screen>
      <Global />
      <TitleBar>
        <Icon name="photoplus" />
        <h1>PhotoPlus X5 - [Untitled1 @ 50%, 1920 x 1080, RGB 8 Bits/Channel]</h1>
        <WinButtons>
          <Plain aria-label="Minimise"><svg width="8" height="8"><path d="M1 4.500h6" stroke="#999" /></svg></Plain>
          <Plain aria-label="Restore"><svg width="8" height="8"><path d="M1.500 2.500h4v4h-4zM3 2V1h4v4H6" fill="none" stroke="#999" /></svg></Plain>
          <Plain aria-label="Close"><svg width="8" height="8"><path d="M1 1l6 6M7 1L1 7" stroke="#999" /></svg></Plain>
        </WinButtons>
      </TitleBar>
      <MenuBar>
        <Grip $h={10} />
        <ul>{menus.map(m => <li key={m}><Plain><Accel word={m} /></Plain></li>)}</ul>
        <MdiButtons>
          <Plain aria-label="Minimise document"><svg width="6" height="7"><path d="M1 5.500h4" stroke="#111" strokeWidth="1.500" /></svg></Plain>
          <Plain aria-label="Restore document"><svg width="7" height="7"><path d="M.5 3h4v3h-4zM2 3V1h4v3.500H4.500" fill="none" stroke="#111" strokeWidth="1.200" /></svg></Plain>
          <Plain aria-label="Close document"><svg width="6" height="7"><path d="M1 1l4 5M5 1L1 6" stroke="#111" strokeWidth="1.500" /></svg></Plain>
        </MdiButtons>
      </MenuBar>

      <BarRow $left={4}>
        <Toolbar>
          <Grip />
          <Tools names={['fresh', 'open', 'save', 'print']} /><Rule />
          <Tools names={['copy', 'paste', 'undo', 'redo']} /><Rule />
          <Tools names={['zoom', 'hand', 'measure']} /><Rule $m={2} />
          <Tools names={['pen', 'pick']} />
          <CaretButton aria-label="Selection options"><Caret /></CaretButton>
          <Rule $m={2} />
          <Tool $wide><Icon name="organizer" />Organizer</Tool>
          <Rule $m={3} /><Tools names={['canvasbrush']} /><Rule /><Tools names={['help']} />
          <MoreButton aria-label="More"><DropIcon /></MoreButton>
        </Toolbar>
        <Gap $g={298} />
        <Toolbar>
          <Grip />
          <Row $gap={5}>
            <Tool $wide><Icon name="photofix" />PhotoFix</Tool>
            <Tool $wide><Icon name="gallery" />Filter Gallery</Tool>
            <Tool $wide><Icon name="knife" />Cutout Studio</Tool>
          </Row>
          <MoreButton aria-label="More"><DropIcon /></MoreButton>
        </Toolbar>
        <Gap $g={173} />
        <Toolbar>
          <Grip />
          <WorkspaceField><label htmlFor="workspace">Workspace</label><Select id="workspace" value="Default" w={64} white /></WorkspaceField>
          <MoreButton aria-label="More"><DropIcon /></MoreButton>
        </Toolbar>
        <Gap $g={157} />
      </BarRow>

      <BarRow $left={17}>
        <Toolbar>
          <Grip />
          <Check><input type="checkbox" />Automatically select layer</Check>
          <Rule />
          <Tools names={['alTop', 'alMid', 'alBot', 'alLeft', 'alCen', 'alRight']} /><Rule />
          <Tools names={['diTop', 'diMid', 'diBot', 'diL', 'diC', 'diR']} />
          <MoreButton aria-label="More"><DropIcon /></MoreButton>
        </Toolbar>
      </BarRow>

      <Main>
        <ToolColumn>
          <ToolBox>
            <DotRow />
            {toolGroups.map((g, gi) => (
              <React.Fragment key={gi}>
                {gi > 0 && <ToolRule />}
                {g.map(([name, more]) => (
                  <ToolSlot key={name} $more={more}>
                    <ToolButton $on={name === 'move'} aria-label={name}><Icon name={name} size={13} /></ToolButton>
                    {more && <svg width="4" height="2" viewBox="0 0 4 2"><path d="M0 0h4L2 2z" fill="#111" /></svg>}
                  </ToolSlot>
                ))}
              </React.Fragment>
            ))}
            <ToolFoot aria-label="More tools"><svg width="5" height="5"><path d="M.5 0v5" stroke="#111" /><path d="M2 0l3 2.500L2 5z" fill="#111" /></svg></ToolFoot>
          </ToolBox>
        </ToolColumn>
        <SideHandle><HandleButton aria-label="Hide tools"><svg width="3" height="5"><path d="M0 0l3 2.500L0 5z" fill="#111" /></svg></HandleButton></SideHandle>

        <Work>
          <Frame>
            <Corner><svg width="7" height="7"><path d="M.5 6.500h6v-6z" fill="#fff" stroke="#7a3c3c" /></svg></Corner>
            <RulerTop><HRuler /></RulerTop>
            <RulerSide><VRuler /></RulerSide>
            <Canvas><Sheet><Artboard /></Sheet></Canvas>
          </Frame>
          <BottomHandle><HandleButton $flat aria-label="Show bottom panel"><svg width="5" height="3"><path d="M0 3h5L2.500 0z" fill="#111" /></svg></HandleButton></BottomHandle>
        </Work>
        <SideHandle><HandleButton aria-label="Hide studio"><svg width="3" height="5"><path d="M0 0l3 2.500L0 5z" fill="#111" /></svg></HandleButton></SideHandle>

        <Studio>
          <Panel $h={131}>
            <PanelHead><Grip $h={9} /><Tab>Histogram<i />Navigator</Tab><Tab $on>Colour</Tab><Fill /><Plain aria-label="Panel menu"><MenuMark /></Plain></PanelHead>
            <PanelBody>
              <Row $gap={8} $h={25} $in={1}>
                <svg width="26" height="25" viewBox="0 0 26 25">
                  <rect x="10" y="10" width="15" height="14" fill="#000" /><rect x="0" y="0" width="15" height="14" fill="#00f" stroke="#fff" strokeWidth=".5" />
                  <rect x="3" y="19" width="4" height="4" fill="#fff" /><rect x="0" y="17" width="4" height="4" fill="#000" />
                  <path d="M17 2h4v4M17 2l5 5M17 2v2.500M22 7h-2.500" fill="none" stroke="#555" />
                </svg>
                <Select label="Colour model" value="RGB" options={['HSL', 'CMYK']} />
              </Row>
              <SliderGroup>
                {channels.map(c => (
                  <SliderRow key={c.id}>
                    <label htmlFor={c.id}>{c.name}</label>
                    <Slider id={c.id} type="range" max={255} defaultValue={c.value} $from={c.from} $to={c.to} />
                    <NumberBox $w={23} defaultValue={c.value} aria-label={`${c.name} value`} />
                  </SliderRow>
                ))}
              </SliderGroup>
              <Spectrum />
            </PanelBody>
          </Panel>

          <Panel $h={112}>
            <PanelHead><Grip $h={9} /><Tab>Adjustments</Tab><Tab $on>Brush Tip</Tab><Tab>History</Tab><Fill /><Plain aria-label="Panel menu"><MenuMark /></Plain></PanelHead>
            <PanelBody>
              <Row><Select label="Brush category" value="Basic" /></Row>
              <BrushList>
                <BrushItems>
                  {brushes.map(b => (
                    <BrushItem key={b.size}><BrushMark>{b.size}</BrushMark><svg height="3"><path d="M0 1.500h112" stroke={b.color} strokeWidth={b.width} /></svg></BrushItem>
                  ))}
                </BrushItems>
                <Scroll>
                  <svg width="6" height="4"><path d="M.5 3.500L3 1l2.500 2.500" fill="none" stroke="#333" strokeWidth="1.300" /></svg>
                  <Thumb /><Fill />
                  <svg width="6" height="4"><path d="M.5 .5L3 3 5.500 .5" fill="none" stroke="#333" strokeWidth="1.300" /></svg>
                </Scroll>
              </BrushList>
            </PanelBody>
          </Panel>

          <Panel>
            <PanelHead><Grip $h={9} /><Tab $on>Layers</Tab><Tab>Channels<i />Macros</Tab><Fill /><Plain aria-label="Panel menu"><MenuMark /></Plain></PanelHead>
            <PanelBody $top={6}>
              <Row $gap={1} $h={14}>
                <Select label="Blend mode" value="Normal" w={71} />
                <OpacityLabel htmlFor="layer-opacity">Opacity:</OpacityLabel>
                <NumberBox id="layer-opacity" $w={24} defaultValue="100" />
                <CaretButton aria-label="Opacity slider"><svg width="4" height="5"><path d="M1 0l3 2.500L1 5z" fill="#111" /></svg></CaretButton>%
              </Row>
              <Hr />
              <Row $gap={7} $h={22}><span>Lock:</span><Icon name="lockT" size={10} /><Icon name="lockC" size={10} /><Icon name="lockM" size={10} /><Icon name="lock" size={10} /></Row>
              <LayerList>
                <LayerRow><EyeBox aria-label="Toggle visibility"><Icon name="eye" size={10} /></EyeBox><ThumbBox />Layer 1</LayerRow>
              </LayerList>
              <Row $gap={5} $h={20} $in={4}>
                {['addLayer', 'folder', 'adjust', 'mask', 'groupMask'].map(n => <Plain key={n} aria-label={n}><Icon name={n} /></Plain>)}
                <Fx>fx</Fx><Fill /><Plain aria-label="Delete layer"><Icon name="trash" /></Plain>
              </Row>
            </PanelBody>
          </Panel>
        </Studio>
      </Main>

      <StatusBar><span>Ready</span><Fill /><StatusCell /><Icon name="resize" /></StatusBar>

      <TaskBar>
        <StartButton aria-label="Start"><Icon name="windows" /></StartButton>
        <SearchBox>
          <Icon name="search" size={11} />
          <input placeholder="Type here to search" aria-label="Search" />
          <svg width="40" height="18" viewBox="0 0 40 18">
            <path d="M16 1c1 5 2.500 6.500 8 8-5.500 1.500-7 3-8 8-1-5-2.500-6.500-8-8 5.500-1.500 7-3 8-8z" fill="#f6b921" />
            <path d="M31 8c.6 2.600 1.400 3.400 4 4-2.600.6-3.400 1.400-4 4-.6-2.600-1.400-3.400-4-4 2.600-.6 3.400-1.400 4-4z" fill="#f6b921" />
            <path d="M3 11.500v5M.5 14h5" stroke="#1d9bea" strokeWidth="2" /><circle cx="27" cy="3" r="1.400" fill="#e8542c" /><circle cx="38.500" cy="15.500" r="1.200" fill="#7cc243" />
          </svg>
        </SearchBox>
        <Apps>{apps.map((a, i) => (a.icon ? <AppButton key={i} $open={a.open} $on={a.on} aria-label={a.icon}><Icon name={a.icon} size={16} /></AppButton> : <span key={i} />))}</Apps>
        <Tray>
          <Weather><Icon name="weather" size={17} /><Badge>2</Badge><span>10°C</span><span>Rain</span></Weather>
          {['chevUp', 'volume', 'cloud', 'monitor', 'dropbox'].map(n => <Plain key={n} aria-label={n}><Icon name={n} size={12} /></Plain>)}
          <Clock>14:55<br />06/03/2026</Clock>
          <Notice aria-label="Notifications"><Icon name="notif" size={13} /><Badge $dark>2</Badge></Notice>
        </Tray>
      </TaskBar>

      <Dialog role="dialog" aria-label="Preferences">
        <DialogTitle><h2>Preferences</h2><Plain aria-label="Close"><svg width="8" height="8"><path d="M.5 .5l7 7M7.500 .5l-7 7" stroke="#222" /></svg></Plain></DialogTitle>
        <DialogBody>
          <CategoryBox>
            <Categories>
              {['General', 'Undo', 'Transparency', 'Plugins', 'Layout', 'UI Settings', 'Studio', 'Keyboard', 'Toolbars', 'Customize'].map(c => <li key={c}><button>{c}</button></li>)}
            </Categories>
          </CategoryBox>
          <Page>
            <PageHead><span>Layout</span><span>Change layout preferences</span></PageHead>
            <Groups>
              <Group $h={34}>
                <legend>Rulers/Grid</legend>
                <Line><Cell $w={22} htmlFor="units">Units:</Cell><Select id="units" value="pixels" w={79} /></Line>
              </Group>
              <Group $h={34}>
                <legend>Grid Colour</legend>
                <Line $in={3}><Swatch aria-label="Grid colour" /></Line>
              </Group>
              <Group $wide $h={60}>
                <legend>Grid Spacing</legend>
                <Line $h={24}><Cell $w={38} htmlFor="gh">Horizontal:</Cell><Spin id="gh" value="960" /><Unit>pix</Unit><Cell $w={42} htmlFor="gs1">Subdivisions:</Cell><Spin id="gs1" value="1" /></Line>
                <Line $h={20}><Cell $w={38} htmlFor="gv">Vertical:</Cell><Spin id="gv" value="540" /><Unit>pix</Unit><Cell $w={42} htmlFor="gs2">Subdivisions:</Cell><Spin id="gs2" value="1" /></Line>
              </Group>
              <Group $wide $h={41}>
                <legend>Pixel Grid</legend>
                <Line $h={28}><Cell as="span" $w={26}>Colour:</Cell><Swatch $gap={14} aria-label="Pixel grid colour" /><Cell $w={30} htmlFor="po">Opacity:</Cell><Spin id="po" value="100" /></Line>
              </Group>
            </Groups>
          </Page>
        </DialogBody>
        <Actions><Push $primary>OK</Push><Push>Cancel</Push><Push>Help</Push></Actions>
      </Dialog>
    </Screen>
  );
}
